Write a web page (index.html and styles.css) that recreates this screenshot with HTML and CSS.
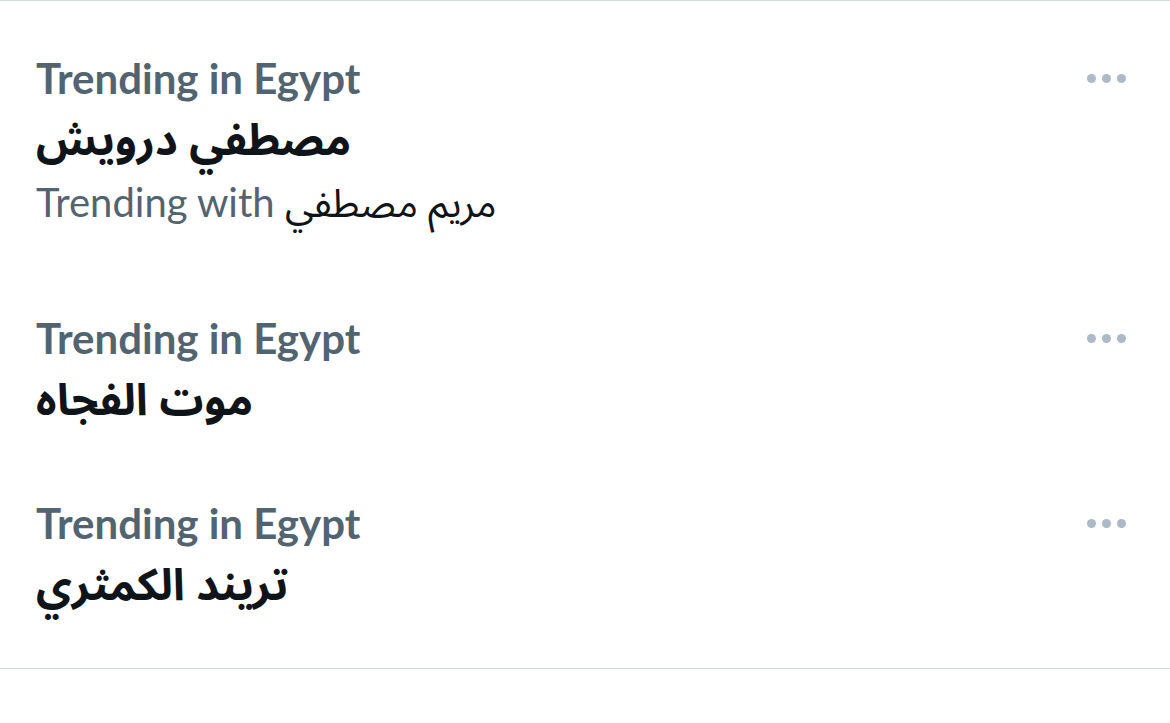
FILE: index.html
```html
<!DOCTYPE html>
<html lang="en">
<head>
<meta charset="utf-8">
<title>Trends</title>
<link rel="stylesheet" href="styles.css">
</head>
<body>
<section class="trends">
  <div class="trend">
    <div class="trend-main">
      <div class="trend-meta">Trending in Egypt</div>
      <div class="trend-title" dir="rtl">مصطفي درويش</div>
      <div class="trend-sub">Trending with <span class="ar">مريم مصطفي</span></div>
    </div>
    <div class="more" aria-label="More"><span></span><span></span><span></span></div>
  </div>
  <div class="trend">
    <div class="trend-main">
      <div class="trend-meta">Trending in Egypt</div>
      <div class="trend-title" dir="rtl">موت الفجاه</div>
    </div>
    <div class="more" aria-label="More"><span></span><span></span><span></span></div>
  </div>
  <div class="trend">
    <div class="trend-main">
      <div class="trend-meta">Trending in Egypt</div>
      <div class="trend-title" dir="rtl">تريند الكمثري</div>
    </div>
    <div class="more" aria-label="More"><span></span><span></span><span></span></div>
  </div>
</section>
</body>
</html>
```
FILE: styles.css
```css
html, body {
  margin: 0;
  padding: 0;
  background: #ffffff;
}
body {
  font-family: Lato, "Noto Sans", "DejaVu Sans", sans-serif;
}
.trends {
  border-top: 1px solid #d3d8dc;
  border-bottom: 1px solid #d3d8dc;
  padding: 18px 0 19px;
}
.trend {
  display: flex;
  justify-content: space-between;
  align-items: flex-start;
  padding: 33px 44px 33px 36px;
}
.trend-main {
  display: flex;
  flex-direction: column;
  align-items: flex-start;
}
.trend-meta {
  font-size: 42px;
  font-weight: 700;
  line-height: 52px;
  color: #536471;
}
.trend-title {
  font-family: "Noto Sans Arabic", "DejaVu Sans", sans-serif;
  font-size: 44px;
  font-weight: 700;
  line-height: 64px;
  margin-top: 5px;
  margin-bottom: -2px;
  color: #0f1419;
}
.trend-sub {
  font-size: 40px;
  line-height: 63px;
  padding-bottom: 10px;
  color: #536471;
}
.trend-sub .ar {
  font-family: "Noto Sans Arabic", "DejaVu Sans", sans-serif;
  color: #0f1419;
  font-size: 39px;
}
.more {
  display: flex;
  gap: 6px;
  padding-top: 22px;
}
.more span {
  width: 9px;
  height: 9px;
  border-radius: 50%;
  background: #abbac6;
}
```
